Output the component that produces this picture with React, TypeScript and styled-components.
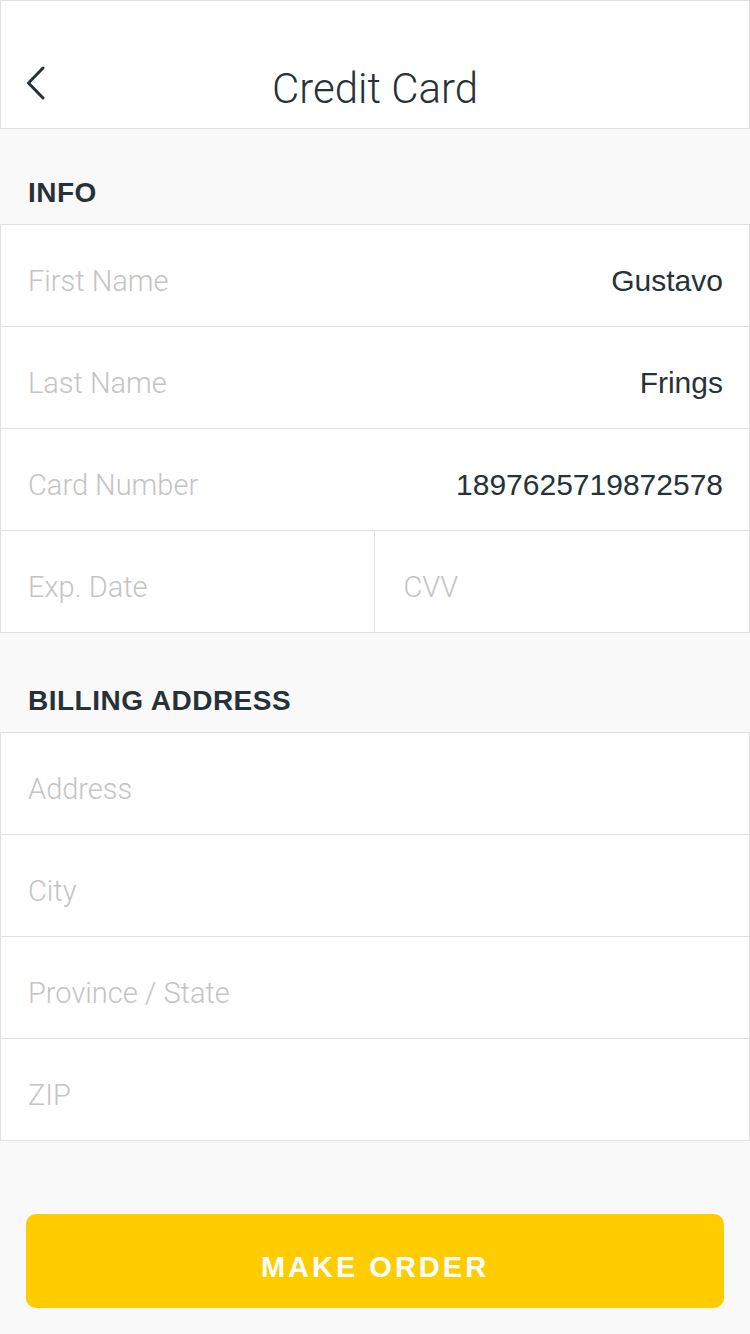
import styled, { createGlobalStyle } from "styled-components";

const GlobalStyle = createGlobalStyle`
	* {
		box-sizing: border-box;
	}
	body {
		margin: 0;
		background-color: #f9f9f9;
		font-family: "Liberation Sans", Arial, sans-serif;
		color: #263238;
	}
`;

const StyledPage = styled.div`
	width: 750px;
	min-height: 1334px;
	background-color: #f9f9f9;
	display: flex;
	flex-direction: column;
`;

const StyledHeader = styled.header`
	height: 129px;
	background-color: #ffffff;
	border: 1px solid #e0e0e0;
	display: grid;
	grid-template-columns: 1fr auto 1fr;
	align-items: end;
	padding: 0 26px 19px;
`;

const StyledBack = styled.button`
	width: 24px;
	height: 40px;
	padding: 0;
	border: none;
	background: none;
	display: flex;
	align-items: center;
	margin-bottom: 6px;
	cursor: pointer;
`;

const StyledTitle = styled.h1`
	margin: 0;
	font-family: Roboto, "Liberation Sans", sans-serif;
	font-weight: 300;
	font-size: 42px;
	line-height: 40px;
	color: #263238;
`;

const StyledSectionTitle = styled.h2<{ $height: number }>`
	margin: 0;
	height: ${(p) => p.$height}px;
	display: flex;
	align-items: flex-end;
	padding: 0 28px 15px;
	font-size: 28px;
	font-weight: 700;
	letter-spacing: 0.5px;
	color: #263238;
`;

const StyledGroup = styled.div`
	background-color: #ffffff;
	border: 1px solid #e0e0e0;
	border-bottom: none;
`;

const StyledRow = styled.div`
	height: 102px;
	border-bottom: 1px solid #e0e0e0;
	display: flex;
`;

const StyledCell = styled.div<{ $divider?: boolean }>`
	flex: 1;
	display: flex;
	align-items: center;
	justify-content: space-between;
	padding: 11px 26px 0 ${(p) => (p.$divider ? 29 : 27)}px;
	border-left: ${(p) => (p.$divider ? "1px solid #e0e0e0" : "none")};
`;

const StyledLabel = styled.span`
	font-family: Roboto, "Liberation Sans", sans-serif;
	font-weight: 300;
	font-size: 29px;
	color: #c4c4c4;
`;

const StyledValue = styled.span`
	font-size: 30px;
	color: #263238;
`;

const StyledFooter = styled.div`
	padding: 73px 26px 26px;
`;

const StyledOrderButton = styled.button`
	width: 698px;
	height: 94px;
	border: none;
	border-radius: 10px;
	background-color: #ffcc00;
	color: #ffffff;
	font-family: "Liberation Sans", Arial, sans-serif;
	font-size: 29px;
	font-weight: 700;
	letter-spacing: 3px;
	padding-top: 14px;
	cursor: pointer;
`;

const infoRows = [
	{ label: "First Name", value: "Gustavo" },
	{ label: "Last Name", value: "Frings" },
	{ label: "Card Number", value: "1897625719872578" },
];

const addressRows = ["Address", "City", "Province / State", "ZIP"];

const App = () => {
	return (
		<StyledPage>
			<GlobalStyle />
			<StyledHeader>
				<StyledBack aria-label="Back">
					<svg width="20" height="34" viewBox="0 0 20 34">
						<path
							d="M16 2 L1.5 17 L16 32"
							fill="none"
							stroke="#263238"
							strokeWidth="3"
							strokeLinecap="round"
							strokeLinejoin="round"
						/>
					</svg>
				</StyledBack>
				<StyledTitle>Credit Card</StyledTitle>
				<div />
			</StyledHeader>

			<StyledSectionTitle $height={95}>INFO</StyledSectionTitle>
			<StyledGroup>
				{infoRows.map((row) => (
					<StyledRow key={row.label}>
						<StyledCell>
							<StyledLabel>{row.label}</StyledLabel>
							<StyledValue>{row.value}</StyledValue>
						</StyledCell>
					</StyledRow>
				))}
				<StyledRow>
					<StyledCell>
						<StyledLabel>Exp. Date</StyledLabel>
					</StyledCell>
					<StyledCell $divider>
						<StyledLabel>CVV</StyledLabel>
					</StyledCell>
				</StyledRow>
			</StyledGroup>

			<StyledSectionTitle $height={99}>BILLING ADDRESS</StyledSectionTitle>
			<StyledGroup>
				{addressRows.map((label) => (
					<StyledRow key={label}>
						<StyledCell>
							<StyledLabel>{label}</StyledLabel>
						</StyledCell>
					</StyledRow>
				))}
			</StyledGroup>

			<StyledFooter>
				<StyledOrderButton>MAKE ORDER</StyledOrderButton>
			</StyledFooter>
		</StyledPage>
	);
};

export default App;
